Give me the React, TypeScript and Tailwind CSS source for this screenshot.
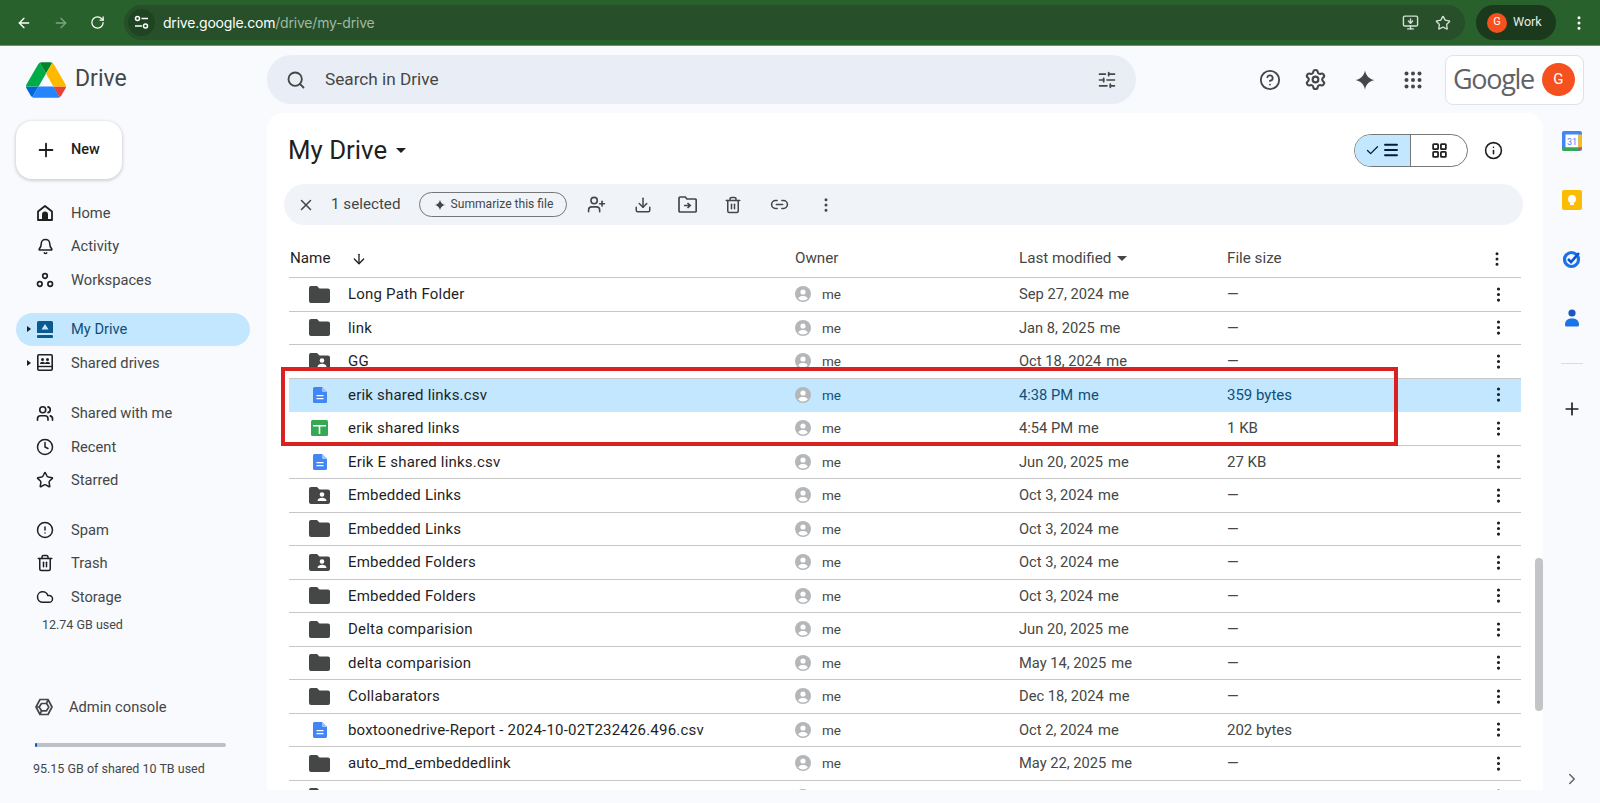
import React from 'react';
import {
  ArrowLeft,
  ArrowRight,
  RotateCw,
  Star,
  MoreVertical,
  Search,
  Settings,
  CircleHelp,
  Plus,
  X,
  Download,
  Trash2,
  Link2,
  ArrowDown,
  ChevronRight,
  Check,
  Menu,
  Info,
  UserPlus,
  Bell,
  Users,
  Clock,
  Cloud,
  CircleAlert,
  SlidersHorizontal,
  MonitorDown,
  LayoutGrid,
} from 'lucide-react';

type Kind = 'folder' | 'shared' | 'doc' | 'sheet';

const rows: { name: string; kind: Kind; date: string; size: string; selected?: boolean }[] = [
  { name: 'Long Path Folder', kind: 'folder', date: 'Sep 27, 2024', size: '—' },
  { name: 'link', kind: 'folder', date: 'Jan 8, 2025', size: '—' },
  { name: 'GG', kind: 'shared', date: 'Oct 18, 2024', size: '—' },
  { name: 'erik shared links.csv', kind: 'doc', date: '4:38 PM', size: '359 bytes', selected: true },
  { name: 'erik shared links', kind: 'sheet', date: '4:54 PM', size: '1 KB' },
  { name: 'Erik E shared links.csv', kind: 'doc', date: 'Jun 20, 2025', size: '27 KB' },
  { name: 'Embedded Links', kind: 'shared', date: 'Oct 3, 2024', size: '—' },
  { name: 'Embedded Links', kind: 'folder', date: 'Oct 3, 2024', size: '—' },
  { name: 'Embedded Folders', kind: 'shared', date: 'Oct 3, 2024', size: '—' },
  { name: 'Embedded Folders', kind: 'folder', date: 'Oct 3, 2024', size: '—' },
  { name: 'Delta comparision', kind: 'folder', date: 'Jun 20, 2025', size: '—' },
  { name: 'delta comparision', kind: 'folder', date: 'May 14, 2025', size: '—' },
  { name: 'Collabarators', kind: 'folder', date: 'Dec 18, 2024', size: '—' },
  { name: 'boxtoonedrive-Report - 2024-10-02T232426.496.csv', kind: 'doc', date: 'Oct 2, 2024', size: '202 bytes' },
  { name: 'auto_md_embeddedlink', kind: 'folder', date: 'May 22, 2025', size: '—' },
  { name: 'auto_create_md', kind: 'folder', date: 'Apr 18, 2025', size: '—' },
];

const DriveLogo = () => (
  <svg width="40" height="36" viewBox="0 0 87.3 78">
    <path d="m6.6 66.85 3.85 6.65c.8 1.4 1.95 2.5 3.3 3.3l13.75-23.8h-27.5c0 1.55.4 3.1 1.2 4.5z" fill="#0066da" />
    <path d="m43.65 25-13.75-23.8c-1.35.8-2.5 1.9-3.3 3.3l-25.4 44a9.06 9.06 0 0 0 -1.2 4.5h27.5z" fill="#00ac47" />
    <path d="m73.55 76.8c1.35-.8 2.5-1.9 3.3-3.3l1.6-2.75 7.65-13.25c.8-1.4 1.2-2.95 1.2-4.5h-27.5l5.85 11.5z" fill="#ea4335" />
    <path d="m43.65 25 13.75-23.8c-1.35-.8-2.9-1.2-4.5-1.2h-18.5c-1.6 0-3.15.45-4.5 1.2z" fill="#00832d" />
    <path d="m59.8 53h-32.3l-13.75 23.8c1.35.8 2.9 1.2 4.5 1.2h50.8c1.6 0 3.15-.45 4.5-1.2z" fill="#2684fc" />
    <path d="m73.4 26.5-12.7-22c-.8-1.4-1.95-2.5-3.3-3.3l-13.75 23.8 16.15 28h27.45c0-1.55-.4-3.1-1.2-4.5z" fill="#ffba00" />
  </svg>
);

const Spark = ({ size = 16 }: { size?: number }) => (
  <svg width={size} height={size} viewBox="0 0 24 24" fill="currentColor">
    <path d="M12 1.5c.9 5.6 4.9 9.6 10.5 10.5-5.6.9-9.6 4.9-10.5 10.5C11.1 16.9 7.1 12.9 1.5 12 7.1 11.1 11.1 7.1 12 1.5z" />
  </svg>
);

const AppsIcon = () => (
  <svg width="18" height="18" viewBox="0 0 18 18" fill="currentColor">
    {[2.5, 9, 15.5].flatMap((y) => [2.5, 9, 15.5].map((x) => <circle key={`${x}-${y}`} cx={x} cy={y} r="2" />))}
  </svg>
);

const SiteIcon = () => (
  <svg width="15" height="15" viewBox="0 0 15 15" fill="none" stroke="currentColor" strokeWidth="1.5">
    <circle cx="3.5" cy="3.5" r="2" />
    <path d="M7.5 3.5H14M1 11h7" />
    <circle cx="11.5" cy="11" r="2" />
  </svg>
);

const HomeIcon = () => (
  <svg width="16" height="16" viewBox="0 0 16 16">
    <path d="M8 1 1 6.5V15h14V6.5z" fill="none" stroke="currentColor" strokeWidth="1.8" strokeLinejoin="round" />
    <path d="M5 9.5a3 3 0 0 1 6 0V15H5z" fill="currentColor" />
  </svg>
);

const WorkspacesIcon = () => (
  <svg width="18" height="16" viewBox="0 0 18 16" fill="none" stroke="currentColor" strokeWidth="1.7">
    <circle cx="9" cy="4" r="2.3" />
    <circle cx="3.8" cy="12" r="2.3" />
    <circle cx="14.2" cy="12" r="2.3" />
  </svg>
);

const MyDriveIcon = () => (
  <svg width="16" height="17" viewBox="0 0 16 17">
    <path d="M1.5 0h13A1.5 1.5 0 0 1 16 1.5V12H0V1.5A1.5 1.5 0 0 1 1.5 0z" fill="currentColor" />
    <path d="M8 3 11.5 8.5H4.5z" fill="#c2e7ff" />
    <rect x="0" y="14" width="16" height="3" rx="1" fill="currentColor" />
  </svg>
);

const SharedDrivesIcon = () => (
  <svg width="16" height="17" viewBox="0 0 16 17" fill="none" stroke="currentColor">
    <rect x="0.8" y="0.8" width="14.4" height="15.4" rx="1.2" strokeWidth="1.6" />
    <path d="M1 12.5h14" strokeWidth="1.4" />
    <circle cx="5.5" cy="5.5" r="1.5" fill="currentColor" stroke="none" />
    <circle cx="10.5" cy="5.5" r="1.5" fill="currentColor" stroke="none" />
    <path d="M3 10c0-3 5-3 5 0zM8 10c0-3 5-3 5 0z" fill="currentColor" stroke="none" />
  </svg>
);

const AdminIcon = () => (
  <svg width="18" height="18" viewBox="0 0 18 18" fill="none" stroke="currentColor" strokeWidth="1.7" strokeLinejoin="round">
    <path d="M5 1.5h8L17 9l-4 7.5H5L1 9z" />
    <path d="M6.5 5.5h5L13.8 9l-2.3 3.8h-5L4.2 9z" />
    <path d="M1 9h3.2M11.5 5.5 13 1.5M6.5 12.8 5 16.5" />
  </svg>
);

const MoveIcon = () => (
  <svg width="19" height="17" viewBox="0 0 19 17" fill="none" stroke="currentColor" strokeWidth="1.7">
    <path d="M1 2.2A1.2 1.2 0 0 1 2.2 1h5L9 3h8a1.2 1.2 0 0 1 1.2 1.2V15a1 1 0 0 1-1 1H2a1 1 0 0 1-1-1z" />
    <path d="M6 9.5h6M9.5 7l2.7 2.5L9.5 12" />
  </svg>
);

const OwnerAvatar = () => (
  <svg width="16" height="16" viewBox="0 0 16 16">
    <circle cx="8" cy="8" r="8" fill="#b4b7ba" />
    <circle cx="8" cy="6" r="2.6" fill="#fff" />
    <path d="M3.2 12.6C4.2 10.5 6 10 8 10s3.8.5 4.8 2.6A6.5 6.5 0 0 1 8 14.5a6.5 6.5 0 0 1-4.8-1.9z" fill="#fff" />
  </svg>
);

const FileIcon = ({ kind }: { kind: Kind }) => {
  if (kind === 'doc') {
    return (
      <svg width="14" height="16" viewBox="0 0 14 16">
        <path d="M1.5 0H9l5 5v9.5a1.5 1.5 0 0 1-1.5 1.5h-11A1.5 1.5 0 0 1 0 14.5v-13A1.5 1.5 0 0 1 1.5 0z" fill="#4285f4" />
        <path d="M9 0l5 5h-3.5A1.5 1.5 0 0 1 9 3.5z" fill="#a1c2fa" />
        <path d="M3.5 8h7v1.3h-7zM3.5 11h7v1.3h-7z" fill="#fff" />
      </svg>
    );
  }
  if (kind === 'sheet') {
    return (
      <svg width="17" height="16" viewBox="0 0 17 16">
        <rect width="17" height="16" rx="1.5" fill="#34a853" />
        <path d="M2 5h13v1.5H9.3V14H7.7V6.5H2z" fill="#fff" />
      </svg>
    );
  }
  return (
    <svg width="21" height="17" viewBox="0 0 21 17">
      <path d="M2 0h6l2.5 2.4H19a2 2 0 0 1 2 2V15a2 2 0 0 1-2 2H2a2 2 0 0 1-2-2V2a2 2 0 0 1 2-2z" fill="#444746" />
      {kind === 'shared' && (
        <>
          <circle cx="13" cy="7.5" r="2.3" fill="#fff" />
          <path d="M8.5 14c0-2.3 2.5-3.3 4.5-3.3s4.5 1 4.5 3.3z" fill="#fff" />
        </>
      )}
    </svg>
  );
};

const NavItem = ({ icon, label, active, caret }: { icon: React.ReactNode; label: string; active?: boolean; caret?: boolean }) => (
  <div className={`relative flex h-[33.5px] items-center rounded-full pl-[20px] ${active ? 'bg-[#c2e7ff] text-[#0f4f78]' : 'text-[#444746]'}`}>
    {caret && <span className="absolute left-[11px] h-0 w-0 border-y-[3.5px] border-l-[4px] border-y-transparent border-l-[#1f1f1f]" />}
    <span className={`flex w-[18px] justify-center ${active ? 'text-[#0b5a8f]' : 'text-[#1f1f1f]'}`}>{icon}</span>
    <span className="ml-[17px] text-[14.7px]">{label}</span>
  </div>
);

export default function App() {
  return (
    <div className="flex h-[803px] w-[1600px] flex-col overflow-hidden bg-[#f8fafd] font-['Roboto',sans-serif] text-[#1f1f1f]">
      {/* browser bar */}
      <div className="flex h-[46px] items-center border-b border-[#6f9272] bg-[#29612c] pl-[16px] pr-[12px] text-white">
        <ArrowLeft size={16} strokeWidth={2} />
        <ArrowRight size={16} strokeWidth={2} className="ml-[21px] text-[#7da580]" />
        <RotateCw size={15} strokeWidth={2} className="ml-[21px]" />
        <div className="ml-[19px] flex h-[35px] flex-1 items-center rounded-full bg-[#274f2a] pr-[14px]">
          <div className="ml-[4px] flex h-[27px] w-[27px] items-center justify-center rounded-full bg-[#1f4422]">
            <SiteIcon />
          </div>
          <span className="ml-[8px] font-['Inter',sans-serif] text-[14px] tracking-[-0.2px]">
            drive.google.com<span className="text-[#9fb9a1]">/drive/my-drive</span>
          </span>
          <div className="flex-1" />
          <MonitorDown size={17} className="text-[#d5e0d5]" />
          <Star size={16} className="ml-[16px] text-[#d5e0d5]" />
        </div>
        <div className="ml-[11px] flex h-[35px] w-[80px] items-center rounded-full bg-[#1b3a1d] pl-[11px]">
          <span className="flex h-[20px] w-[20px] items-center justify-center rounded-full bg-[#f4511e] text-[11px]">G</span>
          <span className="ml-[6px] text-[12.5px] text-[#e6ece6]">Work</span>
        </div>
        <MoreVertical size={18} className="ml-[14px]" />
      </div>

      {/* app header */}
      <div className="flex h-[67px] items-center">
        <div className="flex w-[267px] items-center pl-[26px]">
          <DriveLogo />
          <span className="ml-[9px] text-[23px] text-[#444746]">Drive</span>
        </div>
        <div className="flex h-[49px] w-[869px] items-center rounded-full bg-[#e9eef6] px-[19px]">
          <Search size={20} strokeWidth={2.2} className="text-[#444746]" />
          <span className="ml-[19px] text-[17.2px] text-[#444746]">Search in Drive</span>
          <div className="flex-1" />
          <SlidersHorizontal size={20} className="text-[#444746]" />
        </div>
        <div className="ml-[123px] flex items-center text-[#444746]">
          <CircleHelp size={22} />
          <Settings size={23} strokeWidth={2.2} className="ml-[23px]" />
          <span className="ml-[27px]"><Spark size={22} /></span>
          <span className="ml-[28px]"><AppsIcon /></span>
        </div>
        <div className="ml-[23px] flex h-[50px] w-[139px] items-center rounded-lg border border-[#dde3ea] bg-white pl-[7px]">
          <span className="font-['Open_Sans',sans-serif] text-[27px] tracking-[-1.3px] text-[#5f6368]">Google</span>
          <span className="ml-[8px] flex h-[33px] w-[33px] items-center justify-center rounded-full bg-[#f4511e] text-[15px] text-white">G</span>
        </div>
      </div>

      <div className="flex min-h-0 flex-1">
        {/* sidebar */}
        <div className="flex w-[267px] flex-col">
          <div className="ml-[16px] mt-[8px] flex h-[58px] w-[106px] items-center rounded-2xl bg-white pl-[19px] shadow-[0_1px_3px_1px_rgba(60,64,67,0.2)]">
            <Plus size={22} />
            <span className="ml-[14px] text-[14.5px] font-medium text-[#1f1f1f]">New</span>
          </div>
          <div className="ml-[16px] mt-[17px] w-[234px]">
            <NavItem label="Home" icon={<HomeIcon />} />
            <NavItem label="Activity" icon={<Bell size={17} strokeWidth={2.2} />} />
            <NavItem label="Workspaces" icon={<WorkspacesIcon />} />
            <div className="h-[16px]" />
            <NavItem active caret label="My Drive" icon={<MyDriveIcon />} />
            <NavItem caret label="Shared drives" icon={<SharedDrivesIcon />} />
            <div className="h-[17px]" />
            <NavItem label="Shared with me" icon={<Users size={19} strokeWidth={2.2} />} />
            <NavItem label="Recent" icon={<Clock size={18} />} />
            <NavItem label="Starred" icon={<Star size={18} />} />
            <div className="h-[16px]" />
            <NavItem label="Spam" icon={<CircleAlert size={18} />} />
            <NavItem label="Trash" icon={<Trash2 size={18} />} />
            <NavItem label="Storage" icon={<Cloud size={20} />} />
          </div>
          <div className="ml-[42px] mt-[2px] text-[12.5px] text-[#444746]">12.74 GB used</div>
          <div className="ml-[35px] mt-[62px] flex items-center text-[#444746]">
            <AdminIcon />
            <span className="ml-[16px] text-[14.7px]">Admin console</span>
          </div>
          <div className="ml-[35px] mt-[25px] h-[4px] w-[191px] rounded-full bg-[#bdc1c6]">
            <div className="h-full w-[2px] rounded-full bg-[#0b57d0]" />
          </div>
          <div className="ml-[33px] mt-[13px] text-[12.5px] text-[#444746]">95.15 GB of shared 10 TB used</div>
        </div>

        {/* main panel */}
        <div className="relative mb-[13px] flex w-[1276px] flex-col overflow-hidden rounded-t-2xl bg-white">
          <div className="flex h-[71px] shrink-0 items-center pl-[21px] pr-[40px] pt-[3px]">
            <span className="text-[25.8px] text-[#1f1f1f]">My Drive</span>
            <span className="ml-[9px] h-0 w-0 border-x-[5px] border-t-[5px] border-x-transparent border-t-[#1f1f1f]" />
            <div className="flex-1" />
            <div className="flex h-[33px] w-[114px] overflow-hidden rounded-full border border-[#747775]">
              <div className="flex w-[56px] items-center justify-center gap-[2px] border-r border-[#747775] bg-[#c2e7ff] text-[#001d35]">
                <Check size={15} />
                <Menu size={18} strokeWidth={2.5} />
              </div>
              <div className="flex flex-1 items-center justify-center text-[#1f1f1f]">
                <LayoutGrid size={17} strokeWidth={2.5} />
              </div>
            </div>
            <Info size={19} className="ml-[16px] text-[#1f1f1f]" />
          </div>

          <div className="ml-[17px] mr-[20px] flex h-[41px] shrink-0 items-center rounded-full bg-[#f0f4f9] pl-[13px] text-[#444746]">
            <X size={18} />
            <span className="ml-[16px] text-[15.2px]">1 selected</span>
            <div className="ml-[19px] flex h-[25px] w-[148px] items-center justify-center gap-[5px] rounded-full border border-[#747775] text-[12.1px]">
              <Spark size={12} />
              <span>Summarize this file</span>
            </div>
            <UserPlus size={19} className="ml-[20px]" />
            <Download size={18} className="ml-[28px]" />
            <span className="ml-[26px]"><MoveIcon /></span>
            <Trash2 size={18} className="ml-[27px]" />
            <Link2 size={19} className="ml-[28px]" />
            <MoreVertical size={18} className="ml-[28px]" />
          </div>

          {/* table header */}
          <div className="mx-[22px] mt-[16px] flex h-[37px] shrink-0 items-center border-b border-[#c7c7c7] pb-[1px] text-[15.2px] text-[#444746]">
            <span className="ml-[1px] text-[#1f1f1f]">Name</span>
            <ArrowDown size={16} className="ml-[21px] text-[#1f1f1f]" />
            <span className="absolute left-[528px]">Owner</span>
            <span className="absolute left-[752px] flex items-center gap-[6px]">
              Last modified
              <span className="h-0 w-0 border-x-[5px] border-t-[5px] border-x-transparent border-t-[#444746]" />
            </span>
            <span className="absolute left-[960px]">File size</span>
            <MoreVertical size={18} className="absolute left-[1221px] text-[#1f1f1f]" />
          </div>

          {/* table rows */}
          <div className="mx-[22px] min-h-0 flex-1 overflow-hidden">
            {rows.map((row, i) => (
              <div
                key={i}
                className={`grid h-[33.5px] grid-cols-[506px_224px_208px_1fr_40px] items-center border-b text-[14.7px] ${
                  row.selected ? 'border-[#c2e7ff] bg-[#c2e7ff] text-[#0f4f78]' : 'border-[#c7c7c7] text-[#444746]'
                }`}
              >
                <div className="flex items-center pl-[20px]">
                  <span className="flex w-[21px] justify-center">
                    <FileIcon kind={row.kind} />
                  </span>
                  <span className="ml-[18px] text-[15px] tracking-[0.2px] text-[#1f1f1f]">{row.name}</span>
                </div>
                <div className="flex items-center gap-[11px]">
                  <OwnerAvatar />
                  <span className="text-[13.5px]">me</span>
                </div>
                <div>
                  {row.date}
                  <span className="ml-[5px]">me</span>
                </div>
                <div className="text-[15px]">{row.size}</div>
                <MoreVertical size={19} className="ml-[8px] text-[#1f1f1f]" />
              </div>
            ))}
          </div>

          {/* scrollbar */}
          <div className="absolute right-0 top-[445px] h-[153px] w-[8px] rounded-full bg-[#c4c4c7]" />
          {/* annotation box */}
          <div className="absolute left-[14px] top-[254px] h-[79px] w-[1117px] border-[4px] border-[#d9211f]" />
        </div>

        {/* side rail */}
        <div className="relative flex flex-1 flex-col items-center pt-[18px]">
          <svg width="20" height="20" viewBox="0 0 20 20">
            <rect width="20" height="20" rx="2" fill="#4285f4" />
            <rect x="3.5" y="3.5" width="13" height="13" fill="#fff" />
            <path d="M0 16.5h16.5V20H2a2 2 0 0 1-2-2z" fill="#34a853" />
            <path d="M16.5 3.5H20v13h-3.5z" fill="#fbbc04" />
            <path d="M16.5 16.5H20L16.5 20z" fill="#ea4335" />
            <text x="10" y="14" textAnchor="middle" fontSize="9" fill="#4285f4">31</text>
          </svg>
          <svg width="20" height="20" viewBox="0 0 20 20" className="mt-[39px]">
            <rect width="20" height="20" rx="2" fill="#fbbc04" />
            <circle cx="10" cy="9" r="4" fill="#fff" />
            <rect x="8" y="13" width="4" height="2" fill="#fff" />
          </svg>
          <svg width="20" height="20" viewBox="0 0 20 20" className="mt-[39px]">
            <circle cx="9.5" cy="10.5" r="7" fill="none" stroke="#1a73e8" strokeWidth="3.2" />
            <path d="M6 10l3 3 8-9" fill="none" stroke="#0b57d0" strokeWidth="2.6" />
          </svg>
          <svg width="16" height="18" viewBox="0 0 16 18" className="mt-[40px]">
            <circle cx="8" cy="4" r="3.6" fill="#1a56c4" />
            <path d="M1 16c0-5 3-6.5 7-6.5s7 1.5 7 6.5a1.5 1.5 0 0 1-1.5 1.5h-11A1.5 1.5 0 0 1 1 16z" fill="#1a73e8" />
          </svg>
          <div className="mt-[36px] h-px w-[22px] bg-[#dadce0]" />
          <Plus size={20} className="mt-[35px] text-[#1f1f1f]" />
          <ChevronRight size={18} className="absolute bottom-[15px] text-[#5f6368]" />
        </div>
      </div>
    </div>
  );
}
